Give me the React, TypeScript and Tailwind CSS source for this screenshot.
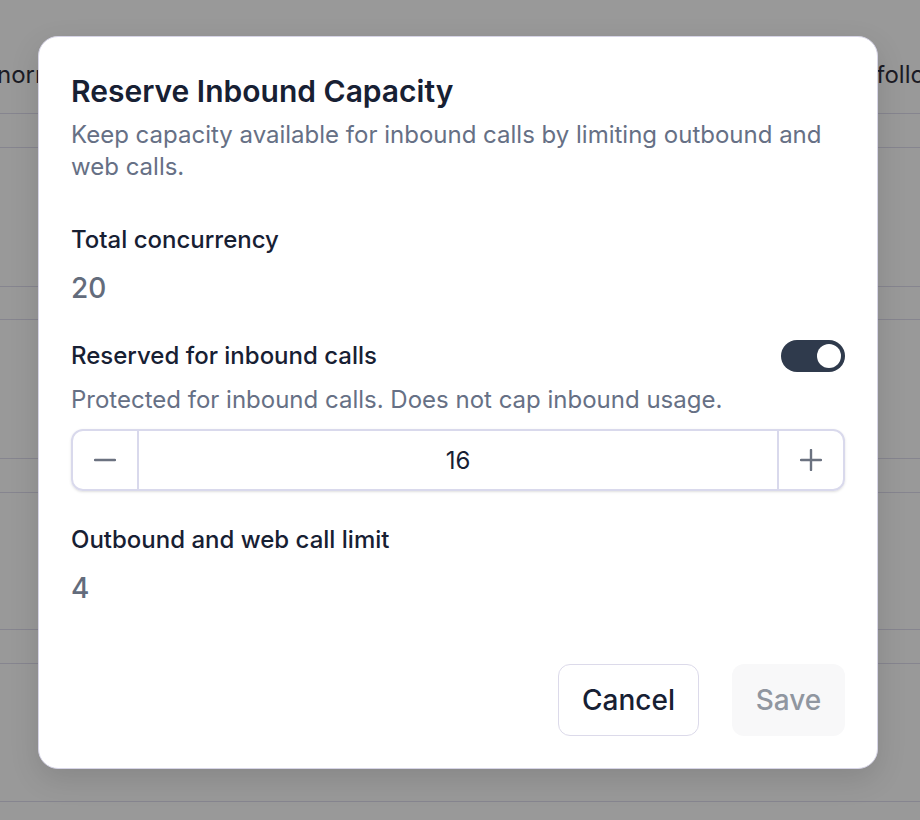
import React from "react";

function Toggle() {
  return (
    <div className="w-[64px] h-[32px] rounded-full bg-[#2f3a4c] flex items-center justify-end px-[4px]">
      <div className="w-[24px] h-[24px] rounded-full bg-white" />
    </div>
  );
}

function MinusIcon() {
  return (
    <svg width="22" height="22" viewBox="0 0 22 22" fill="none">
      <path d="M1 11h20" stroke="#6b7280" strokeWidth="2.4" strokeLinecap="round" />
    </svg>
  );
}

function PlusIcon() {
  return (
    <svg width="22" height="22" viewBox="0 0 22 22" fill="none">
      <path d="M1 11h20M11 1v20" stroke="#6b7280" strokeWidth="2.4" strokeLinecap="round" />
    </svg>
  );
}

function Background() {
  const rows = [34, 139, 33, 139, 34, 137, 34, 138, 60];
  return (
    <div className="w-[920px] h-[820px] bg-[#999999] overflow-hidden">
      <div className="h-[114px] border-b border-[#86858f] flex items-start justify-between pt-[60px] text-[24px] leading-[30px] text-[#1b1b24]">
        <span className="ml-[-3px]">normal</span>
        <span className="mr-[-64px]">follow-up</span>
      </div>
      {rows.map((h, i) => (
        <div key={i} className="border-b border-[#86858f]" style={{ height: h }} />
      ))}
    </div>
  );
}

export default function App() {
  return (
    <div className="relative w-[920px] h-[820px] overflow-hidden" style={{ fontFamily: "Inter, 'Noto Sans', sans-serif" }}>
      <Background />
      <div className="absolute left-[38px] top-[36px] w-[840px] bg-white rounded-[20px] border border-[#d6d4e6] shadow-[0_10px_30px_rgba(0,0,0,0.12)] px-8 pt-[36px] pb-8">
        <h2 className="text-[30px] leading-[36px] font-semibold text-[#172033]">Reserve Inbound Capacity</h2>
        <p className="mt-[10px] text-[24px] leading-[32px] text-[#667085]">
          Keep capacity available for inbound calls by limiting outbound and web calls.
        </p>

        <div className="mt-[43px]">
          <div className="text-[24px] leading-[28px] font-medium text-[#172033]">Total concurrency</div>
          <div className="mt-[18px] text-[28px] leading-[32px] font-medium text-[#636c7c]">20</div>
        </div>

        <div className="mt-[36px]">
          <div className="flex items-center justify-between h-[32px]">
            <div className="text-[24px] leading-[28px] font-medium text-[#172033]">Reserved for inbound calls</div>
            <Toggle />
          </div>
          <div className="mt-[14px] text-[24px] leading-[28px] text-[#667085]">
            Protected for inbound calls. Does not cap inbound usage.
          </div>
          <div className="mt-[15px] h-[62px] flex border-2 border-[#d9d9ec] rounded-[12px] shadow-sm overflow-hidden">
            <div className="w-[66px] flex items-center justify-center border-r-2 border-[#d9d9ec]">
              <MinusIcon />
            </div>
            <div className="flex-1 flex items-center justify-center pt-[2px] text-[24px] text-[#172033]">16</div>
            <div className="w-[66px] flex items-center justify-center border-l-2 border-[#d9d9ec]">
              <PlusIcon />
            </div>
          </div>
        </div>

        <div className="mt-[35px]">
          <div className="text-[24px] leading-[28px] font-medium text-[#172033]">Outbound and web call limit</div>
          <div className="mt-[18px] text-[28px] leading-[32px] font-medium text-[#636c7c]">4</div>
        </div>

        <div className="mt-[60px] flex justify-end gap-[33px]">
          <button className="w-[141px] h-[72px] rounded-[12px] border border-[#dcdaea] bg-white text-[28px] font-medium text-[#172033]">
            Cancel
          </button>
          <button className="w-[113px] h-[72px] rounded-[12px] bg-[#f8f8f9] text-[28px] font-medium text-[#9096a0]">
            Save
          </button>
        </div>
      </div>
    </div>
  );
}
